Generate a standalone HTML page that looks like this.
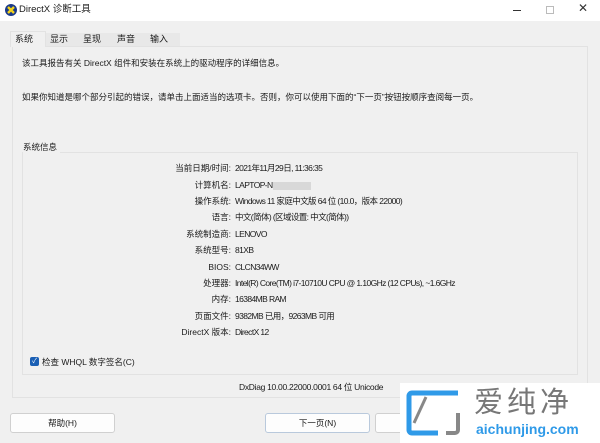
<!DOCTYPE html>
<html><head><meta charset="utf-8"><style>
*{margin:0;padding:0;box-sizing:border-box}
body{width:600px;height:443px;overflow:hidden;background:#f0f0f0;font-family:"Liberation Sans","Noto Sans CJK SC",sans-serif;font-size:8.5px;line-height:12px;color:#1a1a1a;position:relative}
.abs{position:absolute;white-space:nowrap}
.title{position:absolute;left:0;top:0;width:600px;height:21px;background:#fff}
.tab{position:absolute;top:33px;height:13px;font-size:9px;padding-left:3px}
.panel{position:absolute;left:12px;top:46px;width:576px;height:352px;border:1px solid #e2e2e2;background:#f0f0f0}
.group{position:absolute;left:22px;top:152px;width:556px;height:223px;border:1px solid #e2e2e2}
.lbl{position:absolute;right:369px;text-align:right;white-space:nowrap;height:12px;line-height:12px}
.val{position:absolute;left:235px;white-space:nowrap;height:12px;line-height:12px;letter-spacing:-0.6px}
.btn{position:absolute;top:413px;height:20px;width:105px;background:#fdfdfd;border:1px solid #d0d0d0;border-radius:3px;text-align:center;line-height:18px}
</style></head><body>
<div class="title"></div>
<svg class="abs" style="left:5px;top:4px" width="12" height="12" viewBox="0 0 12 12"><circle cx="6" cy="6" r="6" fill="#1a3a8a"/><path d="M3 3L9 9M9 3L3 9" stroke="#f3d21b" stroke-width="2.4"/></svg>
<div class="abs" style="left:19px;top:4px;font-size:9.5px">DirectX 诊断工具</div>
<div class="abs" style="left:513px;top:10px;width:8px;height:1px;background:#333"></div>
<div class="abs" style="left:546px;top:6px;width:8px;height:8px;border:1px solid #bbb"></div>
<div class="abs" style="left:578px;top:2px;font-size:12px;color:#333">✕</div>
<div class="panel"></div>
<div class="abs" style="left:10px;top:31px;width:36px;height:16px;background:#f0f0f0;border:1px solid #e2e2e2;border-bottom:none"></div>
<div class="tab" style="left:12px">系统</div>
<div class="abs" style="left:46px;top:33px;width:134px;height:13px;background:#e8e8e8"></div>
<div class="tab" style="left:47px">显示</div>
<div class="tab" style="left:80px">呈现</div>
<div class="tab" style="left:114px">声音</div>
<div class="tab" style="left:147px">输入</div>
<div class="abs" style="left:22px;top:57px">该工具报告有关 DirectX 组件和安装在系统上的驱动程序的详细信息。</div>
<div class="abs" style="left:22px;top:91px">如果你知道是哪个部分引起的错误，请单击上面适当的选项卡。否则，你可以使用下面的“下一页”按钮按顺序查阅每一页。</div>
<div class="group"></div>
<div class="abs" style="left:23px;top:141px;background:#f0f0f0;padding-right:3px">系统信息</div>
<div class="lbl" style="top:162px">当前日期/时间:</div><div class="val" style="top:162px">2021年11月29日, 11:36:35</div>
<div class="lbl" style="top:179px">计算机名:</div><div class="val" style="top:179px">LAPTOP-N<span style="display:inline-block;width:38px;height:8px;background:#d8d8d8;vertical-align:middle"></span></div>
<div class="lbl" style="top:195px">操作系统:</div><div class="val" style="top:195px">Windows 11 家庭中文版 64 位 (10.0，版本 22000)</div>
<div class="lbl" style="top:211px">语言:</div><div class="val" style="top:211px">中文(简体) (区域设置: 中文(简体))</div>
<div class="lbl" style="top:228px">系统制造商:</div><div class="val" style="top:228px">LENOVO</div>
<div class="lbl" style="top:244px">系统型号:</div><div class="val" style="top:244px">81XB</div>
<div class="lbl" style="top:261px">BIOS:</div><div class="val" style="top:261px">CLCN34WW</div>
<div class="lbl" style="top:277px">处理器:</div><div class="val" style="top:277px">Intel(R) Core(TM) i7-10710U CPU @ 1.10GHz (12 CPUs), ~1.6GHz</div>
<div class="lbl" style="top:293px">内存:</div><div class="val" style="top:293px">16384MB RAM</div>
<div class="lbl" style="top:310px">页面文件:</div><div class="val" style="top:310px">9382MB 已用，9263MB 可用</div>
<div class="lbl" style="top:326px">DirectX 版本:</div><div class="val" style="top:326px">DirectX 12</div>
<div class="abs" style="left:30px;top:357px;width:9px;height:9px;background:#1a5fb4;border-radius:2px;color:#fff;font-size:7px;line-height:9px;text-align:center">✓</div>
<div class="abs" style="left:42px;top:356px">检查 WHQL 数字签名(C)</div>
<div class="abs" style="left:239px;top:381px;letter-spacing:-0.3px">DxDiag 10.00.22000.0001 64 位 Unicode</div>
<div class="btn" style="left:10px">帮助(H)</div>
<div class="btn" style="left:265px;border-color:#b9c9dc">下一页(N)</div>
<div class="btn" style="left:375px">保存</div>
<div class="abs" style="left:400px;top:383px;width:200px;height:60px;background:#fff"></div>
<svg class="abs" style="left:406px;top:389px" width="56" height="48" viewBox="0 0 56 48"><path d="M52 4H6A3 3 0 0 0 3 7V41A3 3 0 0 0 6 44H32" fill="none" stroke="#2f9ae8" stroke-width="5"/><path d="M20 8L8 34" stroke="#888" stroke-width="3"/><path d="M52 24V41A3 3 0 0 1 49 44H40" fill="none" stroke="#888" stroke-width="4"/></svg>
<div class="abs" style="left:474px;top:386px;font-size:29px;line-height:34px;color:#777;letter-spacing:4px">爱纯净</div>
<div class="abs" style="left:476px;top:421px;font-size:14px;line-height:16px;color:#2f9ae8;font-weight:bold">aichunjing.com</div>
</body></html>
